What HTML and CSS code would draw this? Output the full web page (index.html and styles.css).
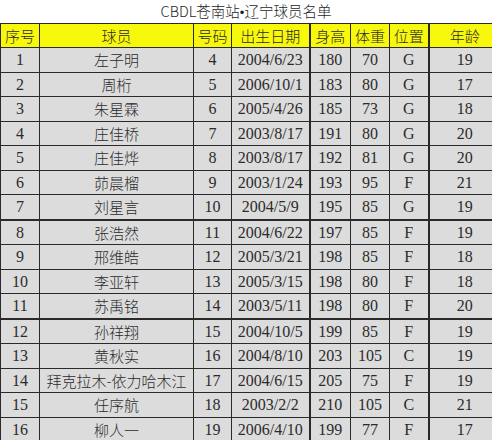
FILE: index.html
```html
<!DOCTYPE html>
<html lang="zh">
<head>
<meta charset="utf-8">
<link rel="stylesheet" href="styles.css">
</head>
<body>
<div class="page">
  <div class="title">CBDL苍南站<span class="dot">•</span>辽宁球员名单</div>
  <table class="roster">
    <colgroup>
      <col class="c1"><col class="c2"><col class="c3"><col class="c4"><col class="c5"><col class="c6"><col class="c7"><col class="c8">
    </colgroup>
    <thead>
      <tr><th>序号</th><th>球员</th><th>号码</th><th>出生日期</th><th>身高</th><th>体重</th><th>位置</th><th>年龄</th></tr>
    </thead>
    <tbody>
      <tr><td>1</td><td class="name">左子明</td><td>4</td><td>2004/6/23</td><td>180</td><td>70</td><td>G</td><td>19</td></tr>
      <tr><td>2</td><td class="name">周桁</td><td>5</td><td>2006/10/1</td><td>183</td><td>80</td><td>G</td><td>17</td></tr>
      <tr><td>3</td><td class="name">朱星霖</td><td>6</td><td>2005/4/26</td><td>185</td><td>73</td><td>G</td><td>18</td></tr>
      <tr><td>4</td><td class="name">庄佳桥</td><td>7</td><td>2003/8/17</td><td>191</td><td>80</td><td>G</td><td>20</td></tr>
      <tr><td>5</td><td class="name">庄佳烨</td><td>8</td><td>2003/8/17</td><td>192</td><td>81</td><td>G</td><td>20</td></tr>
      <tr><td>6</td><td class="name">茆晨榴</td><td>9</td><td>2003/1/24</td><td>193</td><td>95</td><td>F</td><td>21</td></tr>
      <tr class="thick"><td>7</td><td class="name">刘星言</td><td>10</td><td>2004/5/9</td><td>195</td><td>85</td><td>G</td><td>19</td></tr>
      <tr><td>8</td><td class="name">张浩然</td><td>11</td><td>2004/6/22</td><td>197</td><td>85</td><td>F</td><td>19</td></tr>
      <tr><td>9</td><td class="name">邢维皓</td><td>12</td><td>2005/3/21</td><td>198</td><td>85</td><td>F</td><td>18</td></tr>
      <tr><td>10</td><td class="name">李亚轩</td><td>13</td><td>2005/3/15</td><td>198</td><td>80</td><td>F</td><td>18</td></tr>
      <tr class="thick"><td>11</td><td class="name">苏禹铭</td><td>14</td><td>2003/5/11</td><td>198</td><td>80</td><td>F</td><td>20</td></tr>
      <tr><td>12</td><td class="name">孙祥翔</td><td>15</td><td>2004/10/5</td><td>199</td><td>85</td><td>F</td><td>19</td></tr>
      <tr><td>13</td><td class="name">黄秋实</td><td>16</td><td>2004/8/10</td><td>203</td><td>105</td><td>C</td><td>19</td></tr>
      <tr><td>14</td><td class="name">拜克拉木-依力哈木江</td><td>17</td><td>2004/6/15</td><td>205</td><td>75</td><td>F</td><td>19</td></tr>
      <tr><td>15</td><td class="name">任序航</td><td>18</td><td>2003/2/2</td><td>210</td><td>105</td><td>C</td><td>21</td></tr>
      <tr><td>16</td><td class="name">柳人一</td><td>19</td><td>2006/4/10</td><td>199</td><td>77</td><td>F</td><td>17</td></tr>
    </tbody>
  </table>
</div>
</body>
</html>
```

FILE: styles.css
```css
html, body {
  margin: 0;
  padding: 0;
  background: #ffffff;
}
.page {
  width: 492px;
  height: 440px;
  overflow: hidden;
}
.title {
  height: 23px;
  line-height: 22px;
  text-align: center;
  font-family: "Noto Sans CJK SC", "Noto Sans", sans-serif;
  font-weight: 300;
  font-size: 14.5px;
  color: #1e1e1e;
  padding-left: 0;
}
.title .dot {
  font-family: "Liberation Sans", sans-serif;
  font-size: 13px;
}
.roster {
  border-collapse: collapse;
  table-layout: fixed;
  width: 500px;
  background: #dcdcdc;
}
.c1 { width: 39px; }
.c2 { width: 154px; }
.c3 { width: 38px; }
.c4 { width: 78px; }
.c5 { width: 41px; }
.c6 { width: 39px; }
.c7 { width: 39px; }
.c8 { width: 72px; }
.roster th, .roster td {
  border: 1px solid #2a2a2a;
  padding: 0;
  text-align: center;
  white-space: nowrap;
  overflow: hidden;
  color: #2b2b2b;
}
.roster th {
  background: #f8f80c;
  height: 23px;
  font-family: "Noto Sans CJK SC", sans-serif;
  font-weight: 300;
  font-size: 15px;
  line-height: 23px;
}
.roster td {
  height: 23.5px;
  font-family: "Liberation Serif", "Noto Sans CJK SC", serif;
  font-size: 16px;
  line-height: 23px;
}
.roster td.name {
  font-family: "Noto Sans CJK SC", sans-serif;
  font-weight: 300;
  font-size: 15px;
}
.roster th:nth-child(4), .roster td:nth-child(4),
.roster th:nth-child(7), .roster td:nth-child(7) {
  border-right-width: 2px;
}
.roster tr.thick td {
  border-bottom-width: 2px;
}
```
